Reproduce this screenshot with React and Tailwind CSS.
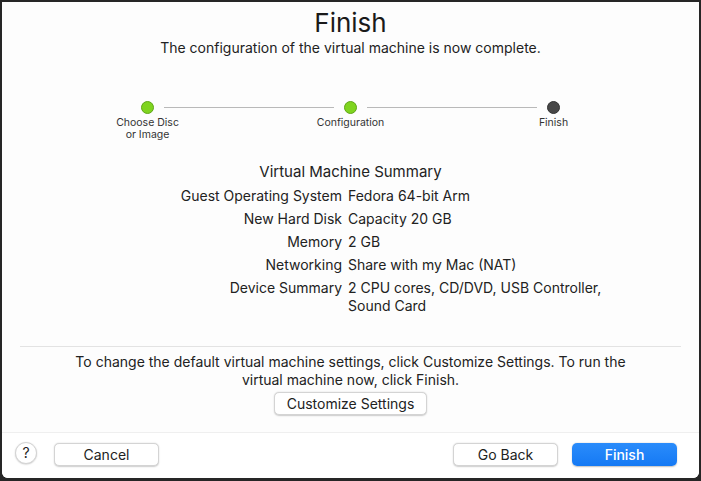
export default function App() {
  const rows = [
    ["Guest Operating System", "Fedora 64-bit Arm"],
    ["New Hard Disk", "Capacity 20 GB"],
    ["Memory", "2 GB"],
    ["Networking", "Share with my Mac (NAT)"],
    ["Device Summary", "2 CPU cores, CD/DVD, USB Controller, Sound Card"],
  ];
  const btn =
    "h-[23px] rounded-[5px] bg-white border border-[#d4d4d4] shadow-[0_0.5px_1.5px_rgba(0,0,0,0.2)] text-[14px] text-[#222] flex items-center justify-center";
  return (
    <div
      className="w-[701px] h-[481px] bg-[#262626] pt-[2px] px-[2px] pb-[3px]"
      style={{ fontFamily: "Inter, 'Liberation Sans', sans-serif" }}
    >
      <div className="w-full h-full bg-[#fdfdfd] rounded-b-[6px] flex flex-col text-[#222]">
        <div className="pt-[6px] text-center text-[26px] leading-[30px] text-[#1a1a1a]">Finish</div>
        <div className="text-center text-[14px] leading-[20px]">
          The configuration of the virtual machine is now complete.
        </div>

        <div className="mt-[43px] flex justify-center items-start">
          <Step label={["Choose Disc", "or Image"]} color="green" />
          <div className="mx-[10px] mt-[6px] w-[170px] h-px bg-[#b9b9b9]" />
          <Step label={["Configuration"]} color="green" />
          <div className="mx-[10px] mt-[6px] w-[170px] h-px bg-[#b9b9b9]" />
          <Step label={["Finish"]} color="dark" />
        </div>

        <div className="mt-[21px] text-center text-[15px] leading-[20px]">Virtual Machine Summary</div>
        <div className="mt-[5px] flex flex-col gap-[5px] text-[14px] leading-[18px]">
          {rows.map(([k, v]) => (
            <div key={k} className="flex">
              <div className="w-[340px] text-right whitespace-nowrap">{k}</div>
              <div className="ml-[6px] w-[262px]">{v}</div>
            </div>
          ))}
        </div>

        <div className="mt-[31px] mx-[18px] h-px bg-[#e3e3e3]" />
        <div className="mt-[6px] text-center text-[14px] leading-[18px] px-[60px]">
          To change the default virtual machine settings, click Customize Settings. To run the virtual machine now, click Finish.
        </div>
        <div className="mt-[3px] flex justify-center">
          <div className={btn + " w-[153px] h-[22px]"}>Customize Settings</div>
        </div>

        <div className="mt-[17px] h-px bg-[#efefef]" />
        <div className="flex-1 bg-white rounded-b-[6px] flex items-center pl-[13px] pr-[22px] pb-[2px]">
          <div className="w-[22px] h-[22px] rounded-full bg-white border border-[#d4d4d4] shadow-[0_0.5px_1.5px_rgba(0,0,0,0.2)] flex items-center justify-center text-[14px] mt-[-4px]">
            ?
          </div>
          <div className={btn + " ml-[17px] w-[105px]"}>Cancel</div>
          <div className="flex-1" />
          <div className={btn + " w-[105px]"}>Go Back</div>
          <div className="ml-[14px] w-[105px] h-[23px] rounded-[5px] bg-gradient-to-b from-[#2a8cfb] to-[#1479f4] shadow-[0_0.5px_1.5px_rgba(0,0,0,0.25)] text-white text-[14px] font-medium flex items-center justify-center">
            Finish
          </div>
        </div>
      </div>
    </div>
  );
}

function Step({ label, color }) {
  const c =
    color === "green"
      ? "bg-[#7fd41f] border border-[#5fa617]"
      : "bg-[#474747] border border-[#333]";
  return (
    <div className="w-[13px] flex flex-col items-center">
      <div className={"w-[13px] h-[13px] rounded-full " + c} />
      <div className="mt-[3px] flex flex-col items-center text-[10.5px] leading-[12px] text-[#333] whitespace-nowrap">
        {label.map((l) => (
          <div key={l}>{l}</div>
        ))}
      </div>
    </div>
  );
}
